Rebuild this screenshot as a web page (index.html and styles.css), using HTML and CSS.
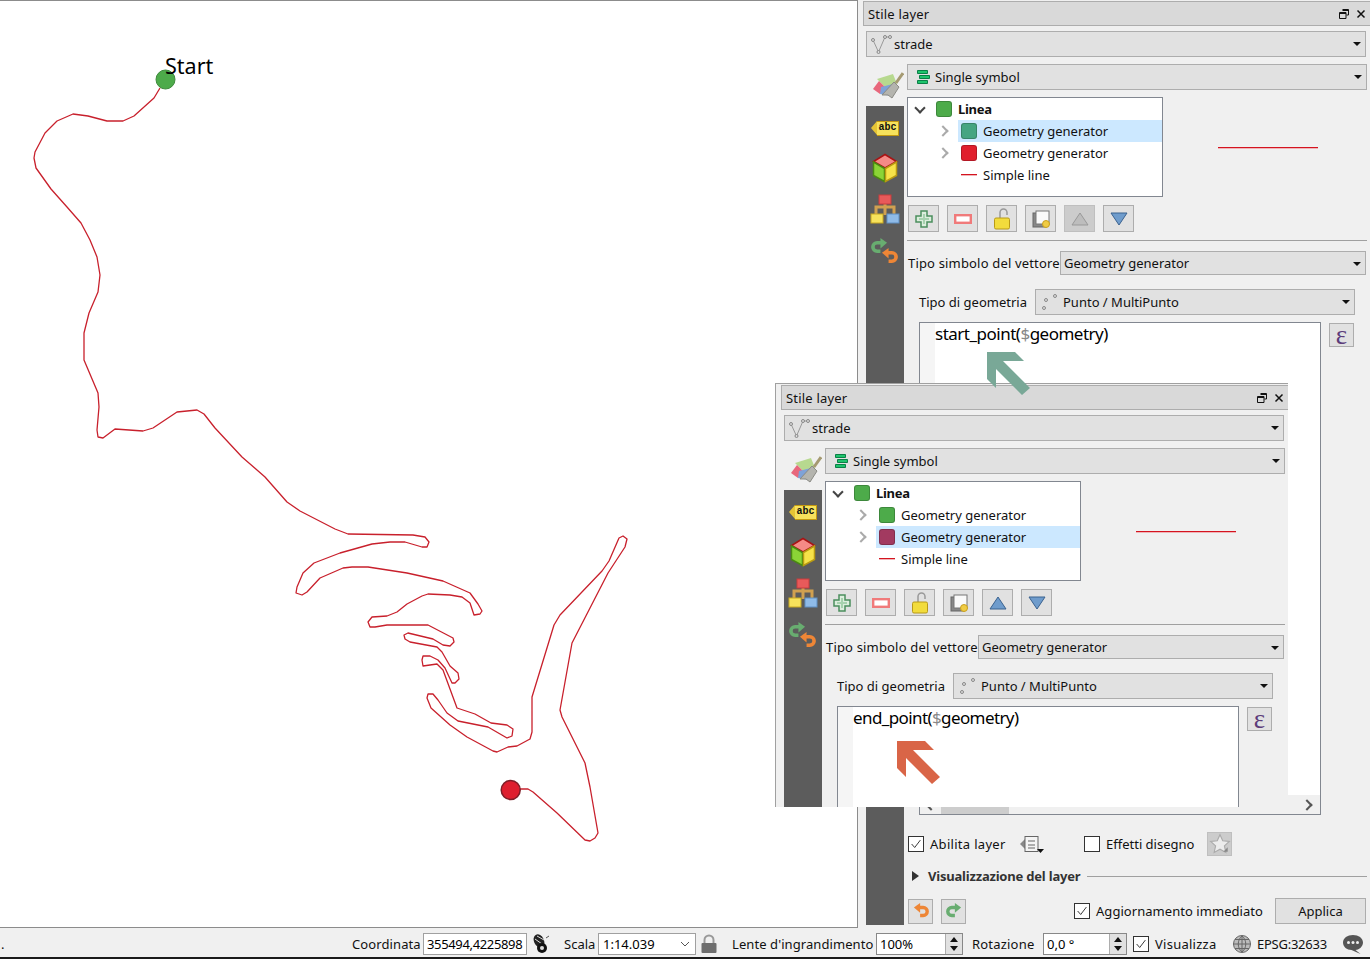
FILE: index.html
```html
<!DOCTYPE html>
<html lang="en">
<head>
  <meta charset="UTF-8">
  <title>Stile layer</title>
  <link rel="stylesheet" href="styles.css">
</head>
<body>
  <!-- icons, reused by both panels -->
  <svg class="icon-defs" width="0" height="0">
    <symbol id="i-float" viewBox="0 0 10 10"><path d="M3.5 .5h6v5.500h-2M.5 3.500h6.500v6h-6.500zM.5 4.500h6.500M3.500 1.500h6" fill="none" stroke="#111"/></symbol>
    <symbol id="i-close" viewBox="0 0 10 10"><path d="M1.500 1.500l7 7M8.500 1.500l-7 7" fill="none" stroke="#111" stroke-width="1.500"/></symbol>
    <symbol id="i-vector" viewBox="0 0 21 20"><polyline points="2,6 7.500,18 14,3 19,3" fill="none" stroke="#999"/><circle cx="2" cy="6" r="1.500" fill="#ddd" stroke="#888"/><circle cx="7.500" cy="18" r="1.500" fill="#ddd" stroke="#888"/><circle cx="14" cy="3" r="1.500" fill="#ddd" stroke="#888"/><circle cx="19" cy="3" r="1.500" fill="#ddd" stroke="#888"/></symbol>
    <symbol id="i-single" viewBox="0 0 14 14"><path d="M1.500 .5h10v3h-10zM3.500 5.500h10v3h-10zM1.500 10.500h10v3h-10z" fill="#1ec46c" stroke="#0b7f47"/></symbol>
    <symbol id="i-brush" viewBox="0 0 32 30"><polygon points="5,9 21,4 25,14 13,17" fill="#b7d98f"/><polygon points="1,19 7,11 13,17 8,24" fill="#e8677c"/><polygon points="9,17 21,14 19,26 8,24" fill="#7ea2d8"/><polygon points="10,25 22,12 27,17 20,28 16,25" fill="#b4b4ae" stroke="#8b8b85"/><path d="M24 13L31 3" stroke="#a59a72" stroke-width="3"/></symbol>
    <symbol id="i-cube" viewBox="0 0 26 30"><path d="M13 1.500L24.500 8.500 13 15 1.500 8.500z" fill="#f58a86" stroke="#a81414" stroke-width="1.500"/><path d="M1.500 9L12.500 15.500V28.500L1.500 22.500z" fill="#8bd436" stroke="#4a8a12" stroke-width="1.500"/><path d="M24.500 9L13.500 15.500V28.500L24.500 22.500z" fill="#f6e249" stroke="#b99a12" stroke-width="1.500"/></symbol>
    <symbol id="i-tree" viewBox="0 0 30 30"><path d="M6 20V13H24V20M15 10V21" fill="none" stroke="#d0a050" stroke-width="3"/><rect x="9" y="1" width="12" height="9" fill="#e85a5a" stroke="#c83c3c"/><rect x="1" y="20" width="12" height="9" fill="#f7e25c" stroke="#c8a820"/><rect x="17" y="20" width="12" height="9" fill="#8fbbe8" stroke="#5f8fc4"/></symbol>
    <symbol id="i-history" viewBox="0 0 28 28"><use href="#i-redo" x="0" y="0" width="17" height="17"/><use href="#i-undo" x="10" y="10" width="17" height="17"/></symbol>
    <symbol id="i-plus" viewBox="0 0 18 18"><path d="M6 1h6v5h5v6h-5v5H6v-5H1V6h5z" fill="#dceedd" stroke="#4b8f5d" stroke-width="1.500"/><path d="M9 4v10M4 9h10" stroke="#a6d2ae" stroke-width="2"/></symbol>
    <symbol id="i-minus" viewBox="0 0 18 10"><rect x="1.200" y="1.200" width="15.600" height="7.600" fill="#fff" stroke="#f07a7a" stroke-width="2.400"/></symbol>
    <symbol id="i-lock" viewBox="0 0 16 22"><path d="M6 10V4.500a3.500 3.500 0 0 1 7 0v2.500" fill="none" stroke="#999" stroke-width="1.500"/><rect x=".5" y="10" width="15" height="11" rx="1.500" fill="#f2dc3c" stroke="#b89a18"/></symbol>
    <symbol id="i-copy" viewBox="0 0 18 18"><rect x="1" y="3" width="13" height="14" fill="#888" stroke="#666"/><rect x="4" y="1" width="13" height="13" fill="#fafafa" stroke="#777"/><circle cx="14" cy="14" r="3.500" fill="#f0cc44" stroke="#c8a020"/></symbol>
    <symbol id="i-up" viewBox="0 0 18 14"><path d="M9 1l8 12H1z" fill="#6f9ccc" stroke="#3b628f"/></symbol>
    <symbol id="i-up-off" viewBox="0 0 18 14"><path d="M9 1l8 12H1z" fill="#bdbdbd" stroke="#999"/></symbol>
    <symbol id="i-down" viewBox="0 0 18 14"><path d="M9 13l8-12H1z" fill="#6f9ccc" stroke="#3b628f"/></symbol>
    <symbol id="i-points" viewBox="0 0 16 18"><circle cx="3" cy="15" r="1.500" fill="#ddd" stroke="#888"/><circle cx="5" cy="7" r="1.500" fill="#ddd" stroke="#888"/><circle cx="14" cy="3" r="1.500" fill="#ddd" stroke="#888"/></symbol>
    <symbol id="i-check" viewBox="0 0 16 16"><path d="M3 8l3.500 4L13 3.500" fill="none" stroke="#333" stroke-width="1.100"/></symbol>
    <symbol id="i-overview" viewBox="0 0 26 18"><path d="M7 3L1 9l6 6z" fill="#888"/><rect x="6" y="1.500" width="13" height="15" fill="#f4f4f4" stroke="#666"/><path d="M9 6h7M9 10h7M9 13h7" stroke="#666"/><path d="M18 14h7l-3.500 4z" fill="#111"/></symbol>
    <symbol id="i-star" viewBox="0 0 20 20"><path d="M10 1.500l2.500 5.500 6 .7-4.500 4 1.300 6L10 14.700 4.700 17.700l1.300-6-4.500-4 6-.7z" fill="#ececec" stroke="#aaa"/><path d="M13 17l4-4v4z" fill="#888"/></symbol>
    <symbol id="i-undo" viewBox="0 0 18 18"><path d="M6 5h5.500a4.500 4.500 0 0 1 0 9H8" fill="none" stroke="#ee8636" stroke-width="3.800"/><path d="M8 0L1 5l7 6z" fill="#ee8636"/></symbol>
    <symbol id="i-redo" viewBox="0 0 18 18"><path d="M12 5H6.500a4.500 4.500 0 0 0 0 9H10" fill="none" stroke="#68ad70" stroke-width="3.800"/><path d="M10 0l7 5-7 6z" fill="#68ad70"/></symbol>
    <symbol id="i-arrow" viewBox="0 0 43 43"><polygon points="0,0 28,0 37,9 16,9 43,36 35,43 9,17 9,36 0,27"/></symbol>
  </svg>

  <div class="app">
    <div class="workspace">
      <div class="map">
        <svg class="map-svg" width="857" height="926" viewBox="0 1 857 926">
          <path class="track" d="M160 88L154 98L134 116L123 121L107 121L88 116L73 114L57 121L45 133L35 152L34 158L36 168L51 189L67 207L81 223L90 240L97 257L100 275L98 292L89 313L84 333L84 360L98 393L99 407L97 430L98 437L103 438L115 429L143 431L153 428L177 412L197 410L204 414L215 428L242 457L265 477L287 502L300 511L335 529L348 534L413 535L425 537L429 542L427 547L422 547L405 542L390 542L372 544L340 553L314 563L303 573L297 587L296 593L302 595L307 592L320 578L343 568L352 567L368 567L407 573L443 581L470 593L478 604L482 611L480 614L474 615L470 603L462 597L450 595L428 594L422 596L407 604L397 612L387 616L372 617L368 622L370 627L375 627L387 625L428 625L453 638L454 642L450 646L443 645L433 639L408 633L404 635L405 639L410 642L437 647L442 652L450 666L458 673L459 679L455 683L452 683L445 668L438 660L430 656L423 656L422 660L423 666L437 664L443 670L457 708L475 714L491 723L507 725L513 729L512 736L507 738L488 727L458 721L447 713L438 700L433 694L428 694L427 698L431 708L450 725L467 737L493 751L497 752L508 747L517 746L530 739L532 732L532 697L554 625L560 615L602 571L609 561L619 538L623 536L627 539L625 547L608 573L572 643L560 710L562 717L585 763L590 787L598 833L595 838L590 841L585 840L557 813L533 792L528 789L520 789"/>
          <circle class="start-dot" cx="165.500" cy="79.500" r="9.500"/>
          <circle class="end-dot" cx="510.700" cy="790" r="9.500"/>
          <text class="start-label" x="165" y="74">Start</text>
        </svg>
      </div>

      <aside class="dock">
        <section class="style-panel">
          <header class="panel-title">
            <span>Stile layer</span>
            <span class="title-btns"><svg class="i10"><use href="#i-float"/></svg><svg class="i10"><use href="#i-close"/></svg></span>
          </header>
          <div class="combo layer-combo"><svg class="i-layer"><use href="#i-vector"/></svg>strade</div>
          <div class="panel-body">
            <div class="side">
              <svg class="brush"><use href="#i-brush"/></svg>
              <div class="rail">
                <span class="abc-tag">abc</span>
                <svg class="rail-cube"><use href="#i-cube"/></svg>
                <svg class="rail-tree"><use href="#i-tree"/></svg>
                <svg class="rail-history"><use href="#i-history"/></svg>
              </div>
            </div>
            <div class="props">
              <div class="combo renderer-combo"><svg class="i-single"><use href="#i-single"/></svg>Single symbol</div>
              <div class="symbol-row">
                <div class="tree">
                  <div class="tree-row top"><span class="twist open"></span><span class="swatch green"></span><b>Linea</b></div>
                  <div class="tree-row selected"><span class="twist"></span><span class="swatch teal"></span>Geometry generator</div>
                  <div class="tree-row"><span class="twist"></span><span class="swatch red"></span>Geometry generator</div>
                  <div class="tree-row"><span class="twist none"></span><span class="swatch line"></span>Simple line</div>
                </div>
                <div class="preview"><span class="preview-line"></span></div>
              </div>
              <div class="tool-row">
                <button class="tool"><svg class="i18"><use href="#i-plus"/></svg></button>
                <button class="tool"><svg class="i-minus"><use href="#i-minus"/></svg></button>
                <button class="tool"><svg class="i-lock"><use href="#i-lock"/></svg></button>
                <button class="tool"><svg class="i18"><use href="#i-copy"/></svg></button>
                <button class="tool off"><svg class="i-tri"><use href="#i-up-off"/></svg></button>
                <button class="tool"><svg class="i-tri"><use href="#i-down"/></svg></button>
              </div>
              <hr class="rule">
              <div class="type-row"><label>Tipo simbolo del vettore</label><div class="combo type-combo">Geometry generator</div></div>
              <div class="geom-row"><label>Tipo di geometria</label><div class="combo geom-combo"><svg class="i-points"><use href="#i-points"/></svg>Punto / MultiPunto</div></div>
              <div class="editor-row">
                <div class="editor">
                  <div class="editor-text">
                    <div class="gutter"></div>
                    <div class="code">start_point(<span class="dollar">$</span>geometry)</div>
                  </div>
                  <div class="hscroll"><span class="hs-left"></span><span class="hs-thumb"></span><span class="hs-right"></span></div>
                </div>
                <button class="eps">ε</button>
              </div>
              <div class="layer-row">
                <span class="check on"><svg><use href="#i-check"/></svg></span><span class="enable-text">Abilita layer</span>
                <svg class="i-overview"><use href="#i-overview"/></svg>
                <span class="check effects"></span><span class="effects-text">Effetti disegno</span>
                <button class="star"><svg class="i22"><use href="#i-star"/></svg></button>
              </div>
              <div class="collapse"><span class="collapse-tri"></span><b>Visualizzazione del layer</b><span class="collapse-line"></span></div>
              <div class="apply-row">
                <button class="hist"><svg class="i16"><use href="#i-undo"/></svg></button>
                <button class="hist"><svg class="i16"><use href="#i-redo"/></svg></button>
                <span class="check live"><svg><use href="#i-check"/></svg></span><span class="live-text">Aggiornamento immediato</span>
                <button class="apply">Applica</button>
              </div>
            </div>
          </div>
        </section>
      </aside>

      <!-- second copy of the panel, dragged over the first one -->
      <section class="style-panel floating">
        <header class="panel-title">
          <span>Stile layer</span>
          <span class="title-btns"><svg class="i10"><use href="#i-float"/></svg><svg class="i10"><use href="#i-close"/></svg></span>
        </header>
        <div class="combo layer-combo"><svg class="i-layer"><use href="#i-vector"/></svg>strade</div>
        <div class="panel-body">
          <div class="side">
            <svg class="brush"><use href="#i-brush"/></svg>
            <div class="rail">
              <span class="abc-tag">abc</span>
              <svg class="rail-cube"><use href="#i-cube"/></svg>
              <svg class="rail-tree"><use href="#i-tree"/></svg>
              <svg class="rail-history"><use href="#i-history"/></svg>
            </div>
          </div>
          <div class="props">
            <div class="combo renderer-combo"><svg class="i-single"><use href="#i-single"/></svg>Single symbol</div>
            <div class="symbol-row">
              <div class="tree">
                <div class="tree-row top"><span class="twist open"></span><span class="swatch green"></span><b>Linea</b></div>
                <div class="tree-row"><span class="twist"></span><span class="swatch green"></span>Geometry generator</div>
                <div class="tree-row selected"><span class="twist"></span><span class="swatch plum"></span>Geometry generator</div>
                <div class="tree-row"><span class="twist none"></span><span class="swatch line"></span>Simple line</div>
              </div>
              <div class="preview"><span class="preview-line"></span></div>
            </div>
            <div class="tool-row">
              <button class="tool"><svg class="i18"><use href="#i-plus"/></svg></button>
              <button class="tool"><svg class="i-minus"><use href="#i-minus"/></svg></button>
              <button class="tool"><svg class="i-lock"><use href="#i-lock"/></svg></button>
              <button class="tool"><svg class="i18"><use href="#i-copy"/></svg></button>
              <button class="tool"><svg class="i-tri"><use href="#i-up"/></svg></button>
              <button class="tool"><svg class="i-tri"><use href="#i-down"/></svg></button>
            </div>
            <hr class="rule">
            <div class="type-row"><label>Tipo simbolo del vettore</label><div class="combo type-combo">Geometry generator</div></div>
            <div class="geom-row"><label>Tipo di geometria</label><div class="combo geom-combo"><svg class="i-points"><use href="#i-points"/></svg>Punto / MultiPunto</div></div>
            <div class="editor-row">
              <div class="editor">
                <div class="editor-text">
                  <div class="gutter"></div>
                  <div class="code end-code">end_point(<span class="dollar">$</span>geometry)</div>
                </div>
              </div>
              <button class="eps">ε</button>
            </div>
          </div>
        </div>
      </section>

      <svg class="arrow arrow-green"><use href="#i-arrow"/></svg>
      <svg class="arrow arrow-orange"><use href="#i-arrow"/></svg>
    </div>

    <footer class="status">
      <span class="status-dot">.</span>
      <span class="coord-label">Coordinata</span>
      <span class="field coord">355494,4225898</span>
      <svg class="mouse" viewBox="0 0 20 20"><ellipse cx="8" cy="7" rx="5" ry="7" transform="rotate(-25 8 7)" fill="#222"/><path d="M4 5l7 5M6 2l7 4" stroke="#ddd"/><circle cx="11" cy="14" r="5" fill="#111"/><circle cx="11" cy="14" r="2" fill="#ddd"/><path d="M15 4l3-2" stroke="#555"/></svg>
      <span class="scale-label">Scala</span>
      <span class="field scale">1:14.039<svg class="chev" viewBox="0 0 10 6"><path d="M1 1l4 4 4-4" fill="none" stroke="#555"/></svg></span>
      <svg class="padlock" viewBox="0 0 16 20"><path d="M3.500 9V6a4.500 4.500 0 0 1 9 0v3" fill="none" stroke="#999" stroke-width="2"/><rect x=".5" y="9" width="15" height="10" rx="1" fill="#6e6e6e"/></svg>
      <span class="mag-label">Lente d'ingrandimento</span>
      <span class="field spin mag">100%<span class="spin-btns"><i class="spin-up"></i><i class="spin-down"></i></span></span>
      <span class="rot-label">Rotazione</span>
      <span class="field spin rot">0,0 °<span class="spin-btns"><i class="spin-up"></i><i class="spin-down"></i></span></span>
      <span class="check render"><svg><use href="#i-check"/></svg></span>
      <span class="render-label">Visualizza</span>
      <svg class="globe" viewBox="0 0 20 20"><circle cx="10" cy="10" r="8.500" fill="#bbb" stroke="#666"/><path d="M1 10h18M3 5.500h14M3 14.500h14M10 2v16M10 2c-5 4-5 12 0 16M10 2c5 4 5 12 0 16" fill="none" stroke="#666"/></svg>
      <span class="epsg">EPSG:32633</span>
      <svg class="bubble" viewBox="0 0 20 20"><path d="M10 1c5.500 0 10 3 10 7.500S15.500 16 12.500 16l5 4-9-4C4 16 0 13 0 8.500S4.500 1 10 1z" fill="#555"/><circle cx="5.500" cy="8.500" r="1.500" fill="#eee"/><circle cx="10" cy="8.500" r="1.500" fill="#eee"/><circle cx="14.500" cy="8.500" r="1.500" fill="#eee"/></svg>
    </footer>
    <div class="taskbar-edge"></div>
  </div>
</body>
</html>
```

FILE: styles.css
```css
body {
  margin: 0;
  background: #f0f0f0;
  font: 13px "Noto Sans", "Open Sans", sans-serif;
  color: #111;
  overflow: hidden;
}
.icon-defs {
  position: absolute;
}
.app {
  width: 1370px;
  height: 959px;
  display: flex;
  flex-direction: column;
}
.workspace {
  position: relative;
  display: flex;
  height: 928px;
}
.map {
  width: 857px;
  height: 926px;
  background: #fff;
  border-top: 1px solid #8c8c8c;
  border-right: 1px solid #8c8c8c;
  border-bottom: 1px solid #8c8c8c;
}
.map-svg {
  display: block;
}
.track {
  fill: none;
  stroke: #c8202c;
  stroke-width: 1.300;
  stroke-linejoin: round;
}
.start-dot {
  fill: #4dab4a;
  stroke: #3d8a3b;
}
.end-dot {
  fill: #de1e2e;
  stroke: #7e1d27;
  stroke-width: 1.500;
}
.start-label {
  font: 21.500px "Noto Sans", sans-serif;
  fill: #000;
}
.dock {
  width: 512px;
}

/* panel */
.style-panel {
  width: 512px;
  height: 927px;
  box-sizing: border-box;
  padding: 1px 0 0 5px;
  background: #f0f0f0;
}
.style-panel.floating {
  position: absolute;
  left: 775px;
  top: 383px;
  width: 513px;
  height: 424px;
  overflow: hidden;
  border-left: 1px solid #a0a0a0;
  border-top: 1px solid #a0a0a0;
}
.panel-title {
  height: 25px;
  box-sizing: border-box;
  display: flex;
  align-items: center;
  justify-content: space-between;
  padding: 0 4px 0 4px;
  background: #d9d9d9;
  border: 1px solid #adadad;
  border-right: 0;
  letter-spacing: 0.2px;
}
.title-btns {
  display: flex;
  gap: 7px;
}
.i10 {
  width: 10px;
  height: 10px;
}
.combo {
  position: relative;
  display: flex;
  align-items: center;
  box-sizing: border-box;
  height: 26px;
  background: #e1e1e1;
  border: 1px solid #adadad;
  padding-left: 3px;
}
.combo::after {
  content: "";
  position: absolute;
  right: 4px;
  top: 10px;
  border-left: 4px solid transparent;
  border-right: 4px solid transparent;
  border-top: 4px solid #111;
}
.layer-combo {
  margin: 5px 4px 0 3px;
  padding-left: 4px;
}
.i-layer {
  width: 21px;
  height: 20px;
  margin-right: 2px;
}
.panel-body {
  display: flex;
  margin: 7px 0 0 3px;
}
.side {
  width: 38px;
  margin-right: 3px;
}
.brush {
  display: block;
  width: 32px;
  height: 30px;
  margin: 6px 0 6px 6px;
}
.rail {
  background: #5c5c5c;
  height: 819px;
  display: flex;
  flex-direction: column;
  align-items: center;
  overflow: hidden;
}
.rail svg {
  flex: none;
}
.abc-tag {
  position: relative;
  box-sizing: border-box;
  width: 22px;
  height: 15px;
  margin: 15px 0 0 6px;
  background: #f7e25c;
  border: 1px solid #c49a10;
  border-left: 0;
  font: bold 10px/12px "Liberation Mono", monospace;
  color: #111;
  text-align: center;
}
.abc-tag::before {
  content: "";
  position: absolute;
  left: -6px;
  top: -1px;
  border-top: 7.500px solid transparent;
  border-bottom: 7.500px solid transparent;
  border-right: 6px solid #e6c435;
}
.rail-cube {
  width: 26px;
  height: 30px;
  margin-top: 17px;
}
.rail-tree {
  width: 30px;
  height: 30px;
  margin-top: 11px;
}
.rail-history {
  width: 28px;
  height: 28px;
  margin-top: 14px;
}
.props {
  width: 460px;
}
.renderer-combo {
  padding-left: 8px;
}
.i-single {
  width: 14px;
  height: 14px;
  margin-right: 5px;
}

/* symbol tree */
.symbol-row {
  display: flex;
  margin-top: 7px;
}
.tree {
  width: 256px;
  height: 100px;
  box-sizing: border-box;
  background: #fff;
  border: 1px solid #828790;
}
.tree-row {
  display: flex;
  align-items: center;
  height: 22px;
  margin-left: 50px;
  position: relative;
}
.tree-row.top {
  margin-left: 0;
  padding-left: 6px;
}
.tree-row.selected {
  background: #cce8ff;
}
.tree-row b {
  letter-spacing: -0.3px;
}
.twist {
  position: absolute;
  left: -19px;
  top: 7px;
  width: 6px;
  height: 6px;
  border-top: 2px solid #aaa;
  border-right: 2px solid #aaa;
  transform: rotate(45deg);
}
.twist.none {
  display: none;
}
.twist.open {
  position: static;
  display: block;
  margin: -3px 12px 0 2px;
  border-color: #444;
  transform: rotate(135deg);
}
.swatch {
  width: 16px;
  height: 16px;
  border-radius: 3px;
  margin: 0 6px 0 3px;
  box-sizing: border-box;
  border: 1px solid rgba(0,0,0,0.2);
}
.tree-row.top .swatch {
  margin: 0 6px 0 0;
}
.swatch.green {
  background: #4dab4a;
}
.swatch.teal {
  background: #45a582;
}
.swatch.red {
  background: #e01f2d;
}
.swatch.plum {
  background: #a23a60;
}
.swatch.line {
  height: 2px;
  border: 0;
  border-top: 1px solid #d4141f;
  border-bottom: 1px solid #f0b4b8;
  border-radius: 0;
}
.preview {
  width: 204px;
  display: flex;
  align-items: center;
  justify-content: center;
}
.preview-line {
  width: 100px;
  height: 1px;
  background: #d4141f;
  box-shadow: 0 1px 0 #f0b4b8;
  margin-right: -6px;
}
.tool-row {
  display: flex;
  gap: 8px;
  margin: 8px 0 0 1px;
}
.tool {
  width: 31px;
  height: 27px;
  padding: 0;
  display: flex;
  align-items: center;
  justify-content: center;
  background: #e1e1e1;
  border: 1px solid #adadad;
}
.tool.off {
  background: #ccc;
  border-color: #bfbfbf;
}
.i16 {
  width: 16px;
  height: 16px;
}
.i18 {
  width: 18px;
  height: 18px;
}
.i22 {
  width: 22px;
  height: 22px;
}
.i-minus {
  width: 18px;
  height: 10px;
}
.i-lock {
  width: 16px;
  height: 22px;
}
.i-tri {
  width: 18px;
  height: 14px;
}
.rule {
  border: 0;
  border-top: 1px solid #a0a0a0;
  margin: 8px 0 0;
}
.type-row {
  display: flex;
  align-items: center;
  margin: 10px 1px 0 1px;
}
.type-row label {
  width: 152px;
  white-space: nowrap;
  letter-spacing: 0.17px;
}
.type-combo {
  flex: 1;
  height: 24px;
}
.geom-row {
  display: flex;
  align-items: center;
  margin: 14px 12px 0 12px;
}
.geom-row label {
  width: 116px;
}
.geom-combo {
  flex: 1;
  padding-left: 5px;
}
.i-points {
  width: 16px;
  height: 18px;
  margin-right: 6px;
}

/* expression box */
.editor-row {
  display: flex;
  margin: 7px 0 0 12px;
}
.editor {
  width: 402px;
  height: 493px;
  box-sizing: border-box;
  border: 1px solid #828790;
  background: #fff;
  display: flex;
  flex-direction: column;
}
.editor-text {
  flex: 1;
  display: flex;
}
.gutter {
  width: 15px;
  background: #f5f5f5;
}
.code {
  font-size: 17px;
  line-height: 22px;
  letter-spacing: -0.5px;
  color: #000;
}
.end-code {
  letter-spacing: -0.6px;
}
.dollar {
  color: #888;
}
.hscroll {
  height: 19px;
  background: #f0f0f0;
  position: relative;
}
.hs-thumb {
  position: absolute;
  left: 21px;
  width: 68px;
  top: 0;
  bottom: 0;
  background: #cdcdcd;
}
.hs-left,
.hs-right {
  position: absolute;
  top: 6px;
  width: 6px;
  height: 6px;
  border-top: 2px solid #555;
  transform: rotate(45deg);
}
.hs-left {
  left: 7px;
  border-left: 2px solid #555;
  transform: rotate(-45deg);
}
.hs-right {
  right: 9px;
  border-right: 2px solid #555;
}
.eps {
  width: 25px;
  height: 24px;
  margin: 1px 0 0 8px;
  padding: 0;
  background: #e1e1e1;
  border: 1px solid #adadad;
  color: #5c3c7a;
  font: 27px/19px "Liberation Serif", serif;
}

/* below the editor */
.check {
  width: 16px;
  height: 16px;
  box-sizing: border-box;
  background: #fff;
  border: 1px solid #333;
  flex: none;
}
.check svg {
  display: block;
  width: 14px;
  height: 14px;
}
.layer-row {
  display: flex;
  align-items: center;
  height: 26px;
  margin: 16px 0 0 1px;
}
.enable-text {
  margin-left: 6px;
  width: 75px;
  letter-spacing: 0.3px;
  white-space: nowrap;
}
.i-overview {
  width: 26px;
  height: 18px;
  margin-left: 14px;
}
.effects {
  margin-left: 39px;
}
.effects-text {
  margin-left: 6px;
  width: 89px;
  white-space: nowrap;
}
.star {
  width: 25px;
  height: 24px;
  margin-left: 12px;
  padding: 0;
  background: #ccc;
  border: 1px solid #bfbfbf;
  display: flex;
  align-items: center;
  justify-content: center;
}
.collapse {
  display: flex;
  align-items: center;
  height: 20px;
  margin: 9px 0 0 5px;
  color: #333;
}
.collapse b {
  letter-spacing: -0.2px;
}
.collapse-tri {
  border-top: 5px solid transparent;
  border-bottom: 5px solid transparent;
  border-left: 7px solid #333;
  margin-right: 9px;
}
.collapse-line {
  flex: 1;
  height: 1px;
  background: #a0a0a0;
  margin-left: 7px;
}
.apply-row {
  display: flex;
  align-items: center;
  height: 26px;
  margin: 12px 1px 0 1px;
}
.hist {
  width: 25px;
  height: 25px;
  margin-right: 8px;
  padding: 0;
  background: #e1e1e1;
  border: 1px solid #adadad;
  display: flex;
  align-items: center;
  justify-content: center;
}
.live {
  margin-left: 100px;
}
.live-text {
  margin-left: 6px;
  letter-spacing: 0.05px;
}
.apply {
  margin-left: auto;
  width: 91px;
  height: 26px;
  padding: 0;
  background: #e1e1e1;
  border: 1px solid #adadad;
  font: inherit;
  color: #111;
}

/* arrows lie over both panels */
.arrow {
  position: absolute;
  width: 43px;
  height: 43px;
}
.arrow-green {
  left: 987px;
  top: 352px;
  fill: #79a897;
}
.arrow-orange {
  left: 897px;
  top: 741px;
  fill: #d96547;
}

/* status bar */
.status {
  height: 29px;
  display: flex;
  align-items: center;
  padding-top: 3px;
  box-sizing: border-box;
  white-space: nowrap;
}
.status > * {
  flex: none;
}
.status-dot {
  width: 4px;
  margin-left: 1px;
}
.coord-label {
  width: 68px;
  margin-left: 347px;
  letter-spacing: 0.1px;
}
.field {
  position: relative;
  box-sizing: border-box;
  height: 22px;
  line-height: 20px;
  background: #fff;
  border: 1px solid #a0a0a0;
  padding-left: 3px;
  color: #000;
}
.coord {
  width: 104px;
  margin-left: 3px;
  letter-spacing: -0.35px;
}
.mouse {
  width: 20px;
  height: 20px;
  margin-left: 4px;
}
.scale-label {
  width: 31px;
  margin-left: 13px;
}
.scale {
  width: 98px;
  margin-left: 3px;
  padding-left: 4px;
}
.chev {
  position: absolute;
  right: 5px;
  top: 7px;
  width: 10px;
  height: 6px;
}
.padlock {
  width: 16px;
  height: 20px;
  margin-left: 5px;
}
.mag-label {
  width: 141px;
  margin-left: 15px;
  letter-spacing: 0.08px;
}
.spin {
  border-color: #888;
}
.spin-btns {
  position: absolute;
  right: 0;
  top: 0;
  bottom: 0;
  width: 16px;
  background: #e1e1e1;
  border-left: 1px solid #adadad;
}
.spin-btns i {
  position: absolute;
  left: 4px;
  border-left: 4px solid transparent;
  border-right: 4px solid transparent;
}
.spin-up {
  top: 3px;
  border-bottom: 5px solid #111;
}
.spin-down {
  bottom: 3px;
  border-top: 5px solid #111;
}
.mag {
  width: 87px;
  margin-left: 3px;
}
.rot-label {
  width: 62px;
  margin-left: 9px;
  letter-spacing: 0.2px;
}
.rot {
  width: 84px;
  margin-left: 9px;
}
.render {
  margin-left: 6px;
}
.render-label {
  width: 61px;
  margin-left: 6px;
  letter-spacing: 0.25px;
}
.globe {
  width: 20px;
  height: 20px;
  margin-left: 16px;
}
.epsg {
  width: 70px;
  margin-left: 5px;
  letter-spacing: -0.25px;
}
.bubble {
  width: 20px;
  height: 20px;
  margin-left: 16px;
}
.taskbar-edge {
  height: 2px;
  background: #1a1a1a;
}
```
